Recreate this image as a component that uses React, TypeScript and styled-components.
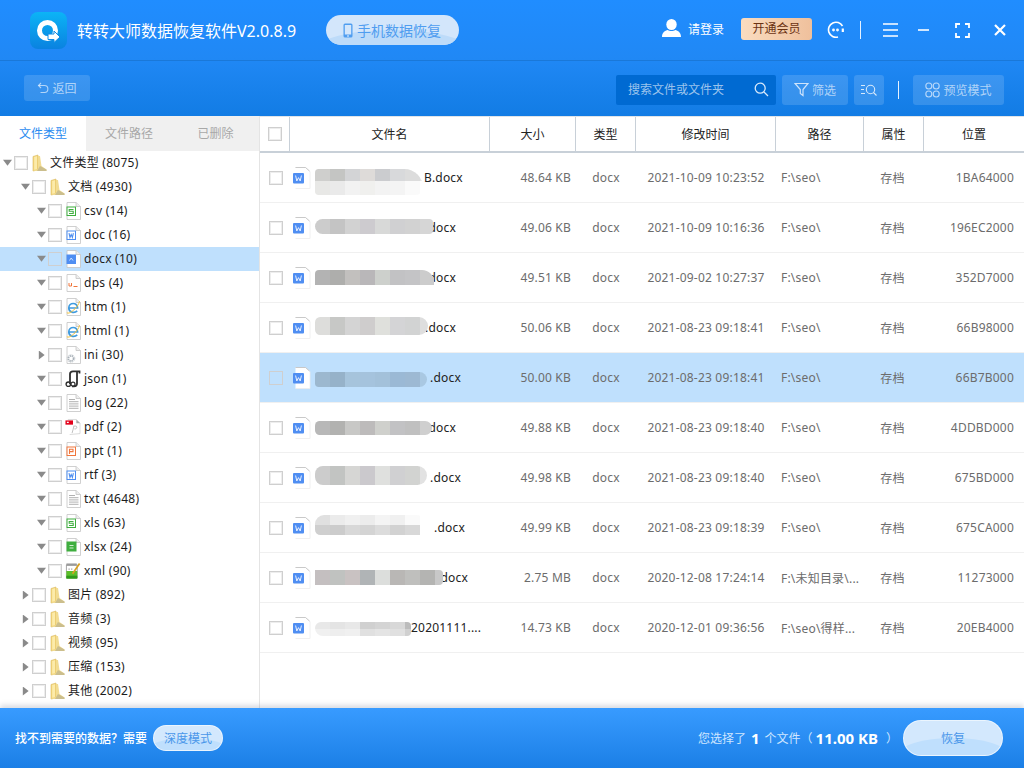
import styled, { createGlobalStyle } from "styled-components";

const GlobalStyle = createGlobalStyle`
  html, body {
    margin: 0;
    padding: 0;
    background: #fff;
  }
  * {
    box-sizing: border-box;
  }
`;

const Page = styled.div`
  width: 1024px;
  height: 768px;
  overflow: hidden;
  display: flex;
  flex-direction: column;
  font-family: "Noto Sans", "Noto Sans CJK SC", sans-serif;
  font-size: 12px;
  color: #222;
`;

const Head = styled.div`
  height: 116px;
  flex-shrink: 0;
  background: linear-gradient(180deg, #208dff 0%, #2088f5 50%, #127ce4 100%);
`;

const TopBar = styled.div`
  height: 61px;
  display: flex;
  align-items: center;
  padding: 0 18px 0 30px;
  border-bottom: 1px solid #1a78d8;
`;

const Title = styled.div`
  margin-left: 10px;
  font-size: 16px;
  color: #fff;
  white-space: nowrap;
  width: 249px;
`;

const Pill = styled.div`
  position: relative;
  overflow: hidden;
  width: 133px;
  height: 30px;
  border-radius: 15px;
  background: #d3e6fb;
  display: flex;
  align-items: center;
  justify-content: center;
  gap: 4px;
  padding-right: 1px;
  font-size: 14px;
  color: #4f9df0;
  &::before {
    content: "";
    position: absolute;
    left: -10px;
    right: -10px;
    top: 15px;
    height: 40px;
    border-radius: 50%;
    background: #bddbf9;
  }
  & > * {
    position: relative;
  }
`;

const TopRight = styled.div`
  margin-left: auto;
  display: flex;
  align-items: center;
`;

const UserIcon = styled.span`
  display: flex;
  margin-top: -4px;
  margin-left: 1px;
`;

const LoginText = styled.span`
  margin-left: 7px;
  margin-top: -2px;
  color: #fff;
  font-size: 12px;
  white-space: nowrap;
`;

const Vip = styled.div`
  margin-left: 17px;
  margin-top: -3px;
  width: 71px;
  height: 22px;
  padding-bottom: 1px;
  border-radius: 3px;
  background: linear-gradient(90deg, #fadcc0, #efc09c);
  color: #6b3212;
  font-size: 12px;
  display: flex;
  align-items: center;
  justify-content: center;
`;

const WinGroup = styled.div`
  margin-left: 15px;
  display: flex;
  align-items: center;
`;

const VLine = styled.div<{ $ml: number; $mr: number; $top?: number }>`
  width: 1px;
  height: 18px;
  background: #e6f2ff;
  margin-left: ${(p) => p.$ml}px;
  margin-right: ${(p) => p.$mr}px;
  margin-top: ${(p) => p.$top ?? 0}px;
`;

const ToolBar = styled.div`
  height: 55px;
  display: flex;
  align-items: flex-start;
  padding: 14px 20px 0 24px;
`;

const GhostButton = styled.div<{ $w: number; $h?: number }>`
  width: ${(p) => p.$w}px;
  height: ${(p) => p.$h ?? 30}px;
  border-radius: 3px;
  background: rgba(255, 255, 255, 0.14);
  color: rgba(255, 255, 255, 0.62);
  display: flex;
  align-items: center;
  justify-content: center;
  gap: 3px;
  padding-bottom: 1px;
  font-size: 12px;
  flex-shrink: 0;
`;

const Search = styled.div`
  margin-left: auto;
  width: 160px;
  height: 30px;
  background: #006ad2;
  border-radius: 2px;
  display: flex;
  align-items: center;
  justify-content: space-between;
  padding: 0 7px 2px 12px;
  color: rgba(255, 255, 255, 0.62);
  font-size: 12px;
`;

const ToolGap = styled.div<{ $w: number }>`
  width: ${(p) => p.$w}px;
  flex-shrink: 0;
`;

const Body = styled.div`
  flex: 1;
  min-height: 0;
  display: flex;
`;

const Side = styled.div`
  width: 260px;
  flex-shrink: 0;
  border-right: 1px solid #e4e4e4;
  display: flex;
  flex-direction: column;
`;

const Tabs = styled.div`
  height: 35px;
  display: grid;
  grid-template-columns: 86px 86px 87px;
  background: #f0f0f0;
  flex-shrink: 0;
`;

const Tab = styled.div<{ $active?: boolean }>`
  display: flex;
  align-items: center;
  justify-content: center;
  padding-bottom: 2px;
  background: ${(p) => (p.$active ? "#fff" : "transparent")};
  color: ${(p) => (p.$active ? "#2b8cf0" : "#a8a8a8")};
`;

const TreeRow = styled.div<{ $level: number; $active?: boolean }>`
  height: 24px;
  display: flex;
  align-items: center;
  padding-left: ${(p) => [3, 21, 37][p.$level]}px;
  background: ${(p) => (p.$active ? "#bfe0fd" : "transparent")};
  color: #1c1c1c;
`;

const Arrow = styled.span<{ $open: boolean }>`
  width: 9px;
  height: 9px;
  flex-shrink: 0;
  margin-right: 2px;
  background: #8a8a8a;
  clip-path: ${(p) =>
    p.$open
      ? "polygon(0 15%, 100% 15%, 50% 80%)"
      : "polygon(20% 0, 85% 50%, 20% 100%)"};
`;

const Check = styled.span<{ $dim?: boolean }>`
  width: 14px;
  height: 14px;
  flex-shrink: 0;
  background: ${(p) => (p.$dim ? "transparent" : "#fff")};
  border: 1px solid #cfcfcf;
  box-shadow: inset 0 0 0 1px ${(p) => (p.$dim ? "transparent" : "#ededed")};
  display: block;
`;

const TreeIcon = styled.span`
  width: 16px;
  height: 18px;
  margin-left: 3px;
  margin-right: 3px;
  flex-shrink: 0;
  display: flex;
  align-items: center;
  justify-content: center;
`;

const TreeLabel = styled.span`
  white-space: nowrap;
  margin-top: -2px;
  letter-spacing: 0.25px;
`;

const Main = styled.div`
  flex: 1;
  min-width: 0;
`;

const TableHead = styled.div`
  height: 37px;
  display: grid;
  grid-template-columns: 30px 200px 86px 60px 140px 88px 60px 100px;
  border-bottom: 2px solid #c8d0d8;
  border-top: 1px solid #dfe4e9;
  color: #222;
`;

const HeadCell = styled.div`
  display: flex;
  align-items: center;
  justify-content: center;
  border-right: 1px solid #c8d0d8;
  &:last-child {
    border-right: none;
  }
`;

const Row = styled.div<{ $active?: boolean }>`
  height: 50px;
  display: grid;
  grid-template-columns: 30px 200px 86px 60px 140px 88px 60px 100px;
  align-items: center;
  border-bottom: 1px solid #f0f0f0;
  background: ${(p) => (p.$active ? "#bfe0fd" : "#fff")};
  color: #6c6c6c;
  letter-spacing: 0.2px;
`;

const CheckCell = styled.div`
  display: flex;
  justify-content: center;
  padding-left: 1px;
`;

const NameCell = styled.div`
  display: flex;
  align-items: center;
  padding-left: 3px;
  color: #222;
  white-space: nowrap;
`;

const RowIcon = styled.span`
  width: 18px;
  height: 22px;
  margin-right: 4px;
  flex-shrink: 0;
  display: flex;
`;

const Blur = styled.div<{ $w: number; $top: number; $radius: string }>`
  position: relative;
  z-index: 1;
  display: flex;
  flex-direction: column;
  overflow: hidden;
  flex-shrink: 0;
  width: ${(p) => p.$w}px;
  margin-top: ${(p) => p.$top}px;
  border-radius: ${(p) => p.$radius};
`;

const BlurStrip = styled.div<{ $h: number }>`
  display: flex;
  height: ${(p) => p.$h}px;
`;

const BlurCell = styled.span<{ $c: string }>`
  width: 15px;
  flex-shrink: 0;
  background: ${(p) => p.$c};
`;

const Suffix = styled.span<{ $gap: number }>`
  margin-left: ${(p) => p.$gap}px;
`;

const SizeCell = styled.div`
  text-align: right;
  padding-right: 5px;
  font-size: 12px;
`;

const CenterCell = styled.div`
  text-align: center;
`;

const AttrCell = styled.div`
  text-align: center;
  padding-right: 3px;
`;

const PathCell = styled.div`
  padding-left: 5px;
  white-space: nowrap;
`;

const PosCell = styled.div`
  text-align: right;
  padding-right: 10px;
`;

const Foot = styled.div`
  position: relative;
  height: 60px;
  flex-shrink: 0;
  background: linear-gradient(180deg, #389bff 0%, #1b7fe6 100%);
  box-shadow: 0 -3px 5px rgba(120, 130, 150, 0.28);
  display: flex;
  align-items: center;
  padding: 0 21px 0 15px;
`;

const FootText = styled.span`
  color: #fff;
  font-weight: 500;
  font-size: 12px;
  margin-right: 6px;
`;

const GlossButton = styled.div<{ $w: number; $h: number }>`
  position: relative;
  overflow: hidden;
  width: ${(p) => p.$w}px;
  height: ${(p) => p.$h}px;
  border-radius: ${(p) => p.$h / 2}px;
  background: #d3e8fd;
  border: 1px solid rgba(255, 255, 255, 0.55);
  color: #4a97ea;
  display: flex;
  align-items: center;
  justify-content: center;
  &::before {
    content: "";
    position: absolute;
    left: -6px;
    right: -6px;
    top: 50%;
    height: 100%;
    border-radius: 50%;
    background: #bfdffd;
  }
  & > span {
    position: relative;
  }
`;

const Selected = styled.div`
  margin-left: auto;
  margin-right: 5px;
  color: #cfe6ff;
  display: flex;
  align-items: center;
  white-space: nowrap;
`;

const SelectedNum = styled.b<{ $ml: number; $mr: number }>`
  color: #fff;
  font-size: 15px;
  font-weight: 700;
  margin-left: ${(p) => p.$ml}px;
  margin-right: ${(p) => p.$mr}px;
`;

const Logo = () => (
  <svg width="37" height="37" viewBox="0 0 37 37">
    <defs>
      <linearGradient id="lg" x1="0" y1="0" x2="0" y2="1">
        <stop offset="0" stopColor="#0cb4f6" />
        <stop offset="1" stopColor="#0a82e0" />
      </linearGradient>
    </defs>
    <rect width="37" height="37" rx="8" fill="url(#lg)" />
    <circle cx="17.5" cy="18.5" r="8" fill="none" stroke="#fff" strokeWidth="5" />
    <path d="M18 22 L24 22 L24 19 L30 25 L24 30.5 L24 27.5 L18 27.5 Z" fill="#fff" stroke="#0f8ce6" strokeWidth="1" />
  </svg>
);

const Stroke = ({ w, h, children }: { w: number; h: number; children: React.ReactNode }) => (
  <svg width={w} height={h} viewBox={`0 0 ${w} ${h}`} fill="none" stroke="currentColor">
    {children}
  </svg>
);

const Folder = () => (
  <svg width="15" height="18" viewBox="0 0 15 18">
    <path d="M1 2.5 L6 1 L6 16 L1 17 Z" fill="#f6d77e" stroke="#d8b860" strokeWidth="0.6" />
    <path d="M6 2 L8 2 L9.5 12 L14.5 15.5 L14.5 17 L1 17 L6 15 Z" fill="#f2dc92" />
    <path d="M2.2 3 L5 2.2 L5 15 L2.2 15.8 Z" fill="#fcebaa" />
    <path d="M8 12 L14.5 15.5 L14.5 17 L5 17 Z" fill="#c4b88c" opacity="0.85" />
  </svg>
);

const Sheet = ({ children }: { children?: React.ReactNode }) => (
  <svg width="15" height="18" viewBox="0 0 15 18">
    <path d="M1 0.5 H10 L14.5 4.5 V17.5 H1 Z" fill="#fff" stroke="#c4c4c4" strokeWidth="0.8" />
    <path d="M10 0.5 V4.5 H14.5" fill="#eee" stroke="#c4c4c4" strokeWidth="0.8" />
    {children}
  </svg>
);

const Letter = ({ d, c }: { d: string; c: string }) => (
  <>
    <rect x="1" y="5" width="8.5" height="8.5" fill="#fff" stroke={c} strokeWidth="1" />
    <path d={d} fill="none" stroke={c} strokeWidth="1.1" />
  </>
);

const W_MARK = "M3 7.2 L4 11.5 L5.2 8.5 L6.4 11.5 L7.4 7.2";
const S_MARK = "M7.5 7.5 H3.2 V9.3 H7.2 V11.5 H3";

const FileIcon = ({ kind }: { kind: string }) => {
  switch (kind) {
    case "csv":
    case "xls":
      return (
        <Sheet>
          <Letter d={S_MARK} c="#3fae3f" />
        </Sheet>
      );
    case "doc":
    case "rtf":
      return (
        <Sheet>
          <Letter d={W_MARK} c="#4d8df0" />
        </Sheet>
      );
    case "docx":
      return (
        <Sheet>
          <rect x="0.5" y="4.5" width="9.5" height="9.5" fill="#4f8ef2" />
          <path d="M3.5 10.5 L5.2 8 L7 10.5" fill="none" stroke="#d8e6ff" strokeWidth="0.9" />
        </Sheet>
      );
    case "dps":
      return (
        <Sheet>
          <path d="M3 9 V12 H5.5 V9 M7.5 12.5 H11.5" fill="none" stroke="#f0763c" strokeWidth="1" />
        </Sheet>
      );
    case "ppt":
      return (
        <Sheet>
          <Letter d="M3.5 12 V7.3 H7 V9.6 H3.5" c="#f0763c" />
        </Sheet>
      );
    case "xlsx":
      return (
        <Sheet>
          <rect x="0.5" y="3.5" width="10" height="10" fill="#3fae3f" />
          <path d="M3.5 7.5 H7.5 M3.5 10 H7.5" stroke="#cfeecf" strokeWidth="1" />
        </Sheet>
      );
    case "log":
    case "txt":
      return (
        <Sheet>
          <path d="M3 5.5 H9 M3 7.7 H12.5 M3 9.9 H12.5 M3 12.1 H12.5 M3 14.3 H12.5" stroke="#a8a8a8" strokeWidth="0.9" />
        </Sheet>
      );
    case "htm":
    case "html":
      return (
        <Sheet>
          <path d="M2.8 10 H11.6 C11.6 4 2.8 4 2.8 10 C2.8 14.5 8.5 15.5 11.2 12.8" fill="none" stroke="#3f9bdf" strokeWidth="1.7" />
          <path d="M0.8 14.8 C3.5 17 12.5 9 13.5 3.2" fill="none" stroke="#f3c23c" strokeWidth="1" />
        </Sheet>
      );
    case "ini":
      return (
        <Sheet>
          <circle cx="5" cy="12.5" r="2.6" fill="none" stroke="#a9b1b8" strokeWidth="1.8" strokeDasharray="1.4 0.7" />
          <circle cx="5" cy="12.5" r="3.8" fill="none" stroke="#c5cbd0" strokeWidth="1" strokeDasharray="1 1" />
        </Sheet>
      );
    case "json":
      return (
        <svg width="16" height="18" viewBox="0 0 16 18">
          <path d="M5 14 V4 C5 2 6 1.3 8 1.3 H14.5 V3.5 M12 2 V13.5 C12 15.5 11 16.3 9 16.3 H7" fill="none" stroke="#303030" strokeWidth="1.8" />
          <circle cx="3.3" cy="14.2" r="2.2" fill="none" stroke="#303030" strokeWidth="1.4" />
          <circle cx="8" cy="14.2" r="2" fill="none" stroke="#303030" strokeWidth="1.2" />
        </svg>
      );
    case "pdf":
      return (
        <svg width="17" height="18" viewBox="0 0 17 18">
          <path d="M3 1 H12 L16 5 V16 L5 17" fill="#fff" stroke="#c8c8c8" strokeWidth="0.7" />
          <path d="M12 1 V5 H16 Z" fill="#aaa" />
          <rect x="0.5" y="2" width="8" height="4.5" fill="#e2001a" />
          <rect x="2" y="3.4" width="2" height="1.4" fill="#fff" />
          <path d="M9 8 H11.5 C13 8 13 11 11 11 H10 M9.5 8 C9 11 8 13 7.5 15.5" fill="none" stroke="#bdbdbd" strokeWidth="1" />
        </svg>
      );
    case "xml":
      return (
        <svg width="17" height="18" viewBox="0 0 17 18">
          <path d="M1.5 2.5 H13 V16.5 H1.5 Z" fill="#fff" stroke="#888" strokeWidth="0.8" />
          <rect x="1.5" y="1" width="11" height="2.5" fill="#9a9a9a" />
          <rect x="1.5" y="9" width="11.5" height="8" fill="#5cbf2a" />
          <rect x="1.5" y="14" width="11.5" height="3" fill="#2f9a1a" />
          <path d="M15.5 1 L8 12" stroke="#d8a020" strokeWidth="1.8" />
          <path d="M4 7 L4.6 7 M7 7 L7.6 7" stroke="#333" strokeWidth="1.2" />
        </svg>
      );
    default:
      return <Sheet />;
  }
};

const RowFile = () => (
  <svg width="18" height="22" viewBox="0 0 18 22">
    <path d="M2.5 21.5 H17 V4.5 L12.5 0.5 H2.5" fill="#fff" stroke="#ececec" strokeWidth="0.8" />
    <path d="M2.5 0.5 H12.5 L16.5 4" fill="none" stroke="#b8b8b8" strokeWidth="0.7" />
    <rect x="0" y="6" width="11" height="10.5" rx="1" fill="#4f8ef2" />
    <path d="M2.6 8.5 L3.8 14 L5.5 10.6 L7.2 14 L8.4 8.5" fill="none" stroke="#e8f0ff" strokeWidth="1" />
  </svg>
);

const tree = [
  { level: 0, open: true, kind: "folder", label: "文件类型 (8075)" },
  { level: 1, open: true, kind: "folder", label: "文档 (4930)" },
  { level: 2, open: true, kind: "csv", label: "csv (14)" },
  { level: 2, open: true, kind: "doc", label: "doc (16)" },
  { level: 2, open: true, kind: "docx", label: "docx (10)", active: true },
  { level: 2, open: true, kind: "dps", label: "dps (4)" },
  { level: 2, open: true, kind: "htm", label: "htm (1)" },
  { level: 2, open: true, kind: "html", label: "html (1)" },
  { level: 2, open: false, kind: "ini", label: "ini (30)" },
  { level: 2, open: true, kind: "json", label: "json (1)" },
  { level: 2, open: true, kind: "log", label: "log (22)" },
  { level: 2, open: true, kind: "pdf", label: "pdf (2)" },
  { level: 2, open: true, kind: "ppt", label: "ppt (1)" },
  { level: 2, open: true, kind: "rtf", label: "rtf (3)" },
  { level: 2, open: true, kind: "txt", label: "txt (4648)" },
  { level: 2, open: true, kind: "xls", label: "xls (63)" },
  { level: 2, open: true, kind: "xlsx", label: "xlsx (24)" },
  { level: 2, open: true, kind: "xml", label: "xml (90)" },
  { level: 1, open: false, kind: "folder", label: "图片 (892)" },
  { level: 1, open: false, kind: "folder", label: "音频 (3)" },
  { level: 1, open: false, kind: "folder", label: "视频 (95)" },
  { level: 1, open: false, kind: "folder", label: "压缩 (153)" },
  { level: 1, open: false, kind: "folder", label: "其他 (2002)" },
];

type FileRow = {
  suffix: string;
  gap: number;
  size: string;
  time: string;
  path: string;
  pos: string;
  w: number;
  top: number;
  radius: string;
  strips: { h: number; c: string[] }[];
  active?: boolean;
};

const files: FileRow[] = [
  {
    suffix: "B.docx", gap: 1, w: 108, size: "48.64 KB", time: "2021-10-09 10:23:52", path: "F:\\seo\\", pos: "1BA64000", top: 8, radius: "6px 30px 12px 6px",
    strips: [
      { h: 12, c: ["#cfcfcd", "#c4c5c3", "#d3d4d6", "#dedbd9", "#cbcccf", "#d8d9db", "#dcdcdc", "#e4e4e4"] },
      { h: 14, c: ["#e8e8e6", "#eaeaea", "#f2f2f2", "#f0f0ee", "#f3f3f3", "#f4f4f4", "#fafafa", "#ffffff"] },
    ],
  },
  {
    suffix: ".docx", gap: -8, w: 118, size: "49.06 KB", time: "2021-10-09 10:16:36", path: "F:\\seo\\", pos: "196EC2000", top: -2, radius: "8px 4px 4px 8px",
    strips: [{ h: 15, c: ["#cccccc", "#c4c4c4", "#d2d2d2", "#cdcbcf", "#d8d9d8", "#d0d0d2", "#d2d2d2", "#d6d6d6"] }],
  },
  {
    suffix: ".docx", gap: -9, w: 119, size: "49.51 KB", time: "2021-09-02 10:27:37", path: "F:\\seo\\", pos: "352D7000", top: 0, radius: "4px 12px 0 0",
    strips: [{ h: 15, c: ["#b3b3b3", "#aeaeac", "#c2c0be", "#b9b7b9", "#cdd0cc", "#c2c2c4", "#c4c4c6", "#cccccc"] }],
  },
  {
    suffix: ".docx", gap: -3, w: 113, size: "50.06 KB", time: "2021-08-23 09:18:41", path: "F:\\seo\\", pos: "66B98000", top: -3, radius: "8px 14px 14px 8px",
    strips: [{ h: 18, c: ["#dddddb", "#c7c8c6", "#d4d4d4", "#cfcdcd", "#dfe0dc", "#d4d4d6", "#d2d3d3", "#dedede"] }],
  },
  {
    suffix: ".docx", gap: 3, w: 112, size: "50.00 KB", time: "2021-08-23 09:18:41", path: "F:\\seo\\", pos: "66B7B000", top: 3, radius: "6px 16px 16px 8px", active: true,
    strips: [{ h: 15, c: ["#9cb8cf", "#96b2c9", "#a6c4dc", "#a5c3dd", "#a3c1da", "#9bb9d5", "#9db9d3", "#a9c8e2"] }],
  },
  {
    suffix: ".docx", gap: -7, w: 117, size: "49.88 KB", time: "2021-08-23 09:18:40", path: "F:\\seo\\", pos: "4DDBD000", top: 0, radius: "8px 12px 12px 8px",
    strips: [{ h: 14, c: ["#b8b8b8", "#b2b2b0", "#c8c8c6", "#bdbbbb", "#cfd0cc", "#c2c2c4", "#c0c0c0", "#cfcfcf"] }],
  },
  {
    suffix: ".docx", gap: 3, w: 112, size: "49.98 KB", time: "2021-08-23 09:18:40", path: "F:\\seo\\", pos: "675BD000", top: -4, radius: "10px 12px 12px 10px",
    strips: [{ h: 19, c: ["#cccccc", "#c2c4c2", "#d6d6d4", "#cbc9cd", "#dfe0de", "#d0d0d2", "#d2d3d1", "#e2e2e2"] }],
  },
  {
    suffix: ".docx", gap: 4, w: 115, size: "49.99 KB", time: "2021-08-23 09:18:39", path: "F:\\seo\\", pos: "675CA000", top: -5, radius: "10px 16px 6px 6px",
    strips: [
      { h: 10, c: ["#e0e0e0", "#ebebeb", "#f0f0f0", "#ececec", "#f4f4f4", "#f0f0f0", "#fafafa", "#ffffff"] },
      { h: 10, c: ["#cfcfcf", "#cccccc", "#d8d8d8", "#d4d4d4", "#dcdcdc", "#d2d2d2", "#d8d8d8", "#ffffff"] },
    ],
  },
  {
    suffix: ".docx", gap: -6, w: 128, size: "2.75 MB", time: "2020-12-08 17:24:14", path: "F:\\未知目录\\...", pos: "11273000", top: 0, radius: "0 4px 4px 0",
    strips: [{ h: 15, c: ["#c4bfc0", "#c0c2c0", "#c9c2c2", "#b0b4b6", "#dcdedc", "#b9b7b5", "#bfbfbd", "#b4b4b2", "#c8c8c8"] }],
  },
  {
    suffix: "20201111....", gap: 0, w: 96, size: "14.73 KB", time: "2020-12-01 09:36:56", path: "F:\\seo\\得样...", pos: "20EB4000", top: 2, radius: "6px 4px 4px 8px",
    strips: [
      { h: 7, c: ["#e8e8e8", "#e4e4e4", "#e8e8e8", "#d0d0d0", "#d4d4d4", "#d8d8d8", "#bcbcbc"] },
      { h: 7, c: ["#f0f0f0", "#eeeeee", "#f0f0f0", "#e0e0e0", "#e4e4e4", "#e0e0e0", "#d0d0d0"] },
    ],
  },
];

const App = () => {
  return (
    <Page>
      <GlobalStyle />
      <Head>
        <TopBar>
          <Logo />
          <Title>转转大师数据恢复软件V2.0.8.9</Title>
          <Pill>
            <svg width="10" height="15" viewBox="0 0 10 15">
              <rect x="0.5" y="0.5" width="9" height="14" rx="1.5" fill="#4f9df0" />
              <rect x="1.8" y="2" width="6.4" height="9.5" fill="#d3e6fb" />
              <circle cx="5" cy="13" r="0.8" fill="#fff" />
            </svg>
            <span>手机数据恢复</span>
          </Pill>
          <TopRight>
            <UserIcon>
              <svg width="19" height="18" viewBox="0 0 19 18" fill="#fff">
                <ellipse cx="9.5" cy="5.5" rx="5.2" ry="5.5" />
                <path d="M0 18 C0 13.5 3 11.5 5.8 11 C7.5 12.3 11.5 12.3 13.2 11 C16 11.5 19 13.5 19 18 Z" />
              </svg>
            </UserIcon>
            <LoginText>请登录</LoginText>
            <Vip>开通会员</Vip>
            <WinGroup>
              <svg width="18" height="18" viewBox="0 0 18 18" fill="none" stroke="#fff" strokeWidth="1.6">
                <path d="M15.5 5 A7.5 7.5 0 1 0 11 16" />
                <path d="M15.8 7.5 V11" strokeWidth="2.2" />
                <circle cx="6.5" cy="9" r="0.6" fill="#fff" />
                <circle cx="10.5" cy="9" r="0.6" fill="#fff" />
              </svg>
              <VLine $ml={15} $mr={22} />
              <Stroke w={15} h={14}>
                <path d="M0 1 H15 M0 7 H15 M0 13 H15" stroke="#fff" strokeWidth="1.6" />
              </Stroke>
              <ToolGap $w={20} />
              <Stroke w={11} h={14}>
                <path d="M0 7 H11" stroke="#fff" strokeWidth="1.6" />
              </Stroke>
              <ToolGap $w={26} />
              <Stroke w={15} h={15}>
                <path d="M1 5 V1 H5 M10 1 H14 V5 M14 10 V14 H10 M5 14 H1 V10" stroke="#fff" strokeWidth="1.8" />
              </Stroke>
              <ToolGap $w={24} />
              <Stroke w={12} h={12}>
                <path d="M1 1 L11 11 M11 1 L1 11" stroke="#fff" strokeWidth="2.2" />
              </Stroke>
            </WinGroup>
          </TopRight>
        </TopBar>
        <ToolBar>
          <GhostButton $w={66} $h={26}>
            <svg width="12" height="12" viewBox="0 0 12 12" fill="none" stroke="currentColor" strokeWidth="1.1">
              <path d="M1.5 3.5 H7.5 C12 3.5 12 10.5 7.5 10.5 H3.5" />
              <path d="M4 1 L1.5 3.5 L4 6" />
            </svg>
            <span>返回</span>
          </GhostButton>
          <Search>
            <span>搜索文件或文件夹</span>
            <svg width="15" height="15" viewBox="0 0 15 15" fill="none" stroke="#d7e9fb" strokeWidth="1.3">
              <circle cx="6.2" cy="6.2" r="5" />
              <path d="M10 10 L14 14" />
            </svg>
          </Search>
          <ToolGap $w={6} />
          <GhostButton $w={66}>
            <svg width="15" height="15" viewBox="0 0 15 15" fill="none" stroke="#cfe4fb" strokeWidth="1.2">
              <path d="M1 1.5 H14 L9 7.5 V13.5 L6.3 11.5 V7.5 Z" />
            </svg>
            <span>筛选</span>
          </GhostButton>
          <ToolGap $w={6} />
          <GhostButton $w={30}>
            <svg width="16" height="12" viewBox="0 0 16 12" fill="none" stroke="#d7e9fb" strokeWidth="1.1">
              <path d="M0 1.5 H4 M0 5.5 H3 M0 9.5 H4" />
              <circle cx="9.5" cy="5.5" r="4.2" />
              <path d="M12.5 8.5 L15.5 11.5" />
            </svg>
          </GhostButton>
          <VLine $ml={14} $mr={14} $top={6} />
          <GhostButton $w={91}>
            <svg width="15" height="16" viewBox="0 0 15 16" fill="none" stroke="#b8d8fa" strokeWidth="1.1">
              <circle cx="3.8" cy="4" r="3" />
              <circle cx="11.2" cy="4" r="3" />
              <circle cx="3.8" cy="12" r="3" />
              <circle cx="11.2" cy="12" r="3" />
            </svg>
            <span>预览模式</span>
          </GhostButton>
        </ToolBar>
      </Head>
      <Body>
        <Side>
          <Tabs>
            <Tab $active>文件类型</Tab>
            <Tab>文件路径</Tab>
            <Tab>已删除</Tab>
          </Tabs>
          {tree.map((item) => (
            <TreeRow key={item.label} $level={item.level} $active={item.active}>
              <Arrow $open={item.open} />
              <Check $dim={item.active} />
              <TreeIcon>{item.kind === "folder" ? <Folder /> : <FileIcon kind={item.kind} />}</TreeIcon>
              <TreeLabel>{item.label}</TreeLabel>
            </TreeRow>
          ))}
        </Side>
        <Main>
          <TableHead>
            <HeadCell>
              <Check />
            </HeadCell>
            <HeadCell>文件名</HeadCell>
            <HeadCell>大小</HeadCell>
            <HeadCell>类型</HeadCell>
            <HeadCell>修改时间</HeadCell>
            <HeadCell>路径</HeadCell>
            <HeadCell>属性</HeadCell>
            <HeadCell>位置</HeadCell>
          </TableHead>
          {files.map((file) => (
            <Row key={file.pos} $active={file.active}>
              <CheckCell>
                <Check $dim={file.active} />
              </CheckCell>
              <NameCell>
                <RowIcon>
                  <RowFile />
                </RowIcon>
                <Blur $w={file.w} $top={file.top} $radius={file.radius}>
                  {file.strips.map((strip, i) => (
                    <BlurStrip key={i} $h={strip.h}>
                      {strip.c.map((c, j) => (
                        <BlurCell key={j} $c={c} />
                      ))}
                    </BlurStrip>
                  ))}
                </Blur>
                <Suffix $gap={file.gap}>{file.suffix}</Suffix>
              </NameCell>
              <SizeCell>{file.size}</SizeCell>
              <CenterCell>docx</CenterCell>
              <CenterCell>{file.time}</CenterCell>
              <PathCell>{file.path}</PathCell>
              <AttrCell>存档</AttrCell>
              <PosCell>{file.pos}</PosCell>
            </Row>
          ))}
        </Main>
      </Body>
      <Foot>
        <FootText>找不到需要的数据？需要</FootText>
        <GlossButton $w={70} $h={26}>
          <span>深度模式</span>
        </GlossButton>
        <Selected>
          <span>您选择了</span>
          <SelectedNum $ml={5} $mr={5}>1</SelectedNum>
          <span>个文件（</span>
          <SelectedNum $ml={3} $mr={8}>11.00 KB</SelectedNum>
          <span>）</span>
        </Selected>
        <GlossButton $w={100} $h={36}>
          <span>恢复</span>
        </GlossButton>
      </Foot>
    </Page>
  );
};

export default App;
